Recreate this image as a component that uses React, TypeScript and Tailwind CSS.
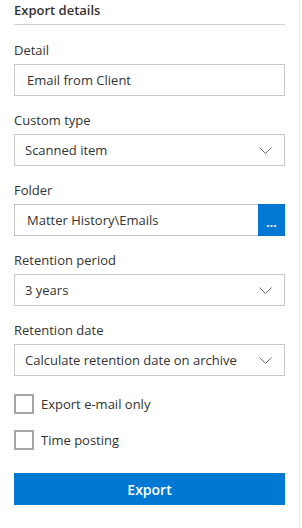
import React from "react";

function Chevron() {
  return (
    <svg width="13" height="7" viewBox="0 0 13 7" fill="none" className="shrink-0">
      <path d="M0.5 0.5 L6.5 6.5 L12.5 0.5" stroke="#6b6b6b" strokeWidth="1" />
    </svg>
  );
}

function Field({ label, children }: { label: string; children: React.ReactNode }) {
  return (
    <div className="flex flex-col gap-[4px]">
      <label className="h-[20px] leading-[20px] text-[#333]">{label}</label>
      {children}
    </div>
  );
}

function Select({ value }: { value: string }) {
  return (
    <div className="h-[32px] border border-[#c8c8c8] flex items-start pl-[10px] pr-[12px] overflow-hidden">
      <span className="flex-1 leading-[20px] pt-[5px] text-[#333] pr-[6px]">{value}</span>
      <span className="h-[30px] flex items-center">
        <Chevron />
      </span>
    </div>
  );
}

function Check({ label }: { label: string }) {
  return (
    <div className="flex items-center gap-[7px] h-[20px]">
      <span className="w-[20px] h-[20px] border-2 border-[#a6a6a6] bg-white" />
      <span className="text-[#333] leading-[20px]">{label}</span>
    </div>
  );
}

export default function App() {
  return (
    <div
      className="w-[300px] h-[528px] bg-white border-r border-[#ececec] text-[13px]"
      style={{ fontFamily: '"Open Sans", "Noto Sans", sans-serif' }}
    >
      <div className="px-[14px]">
        <div className="h-[25px] border-b border-[#d0d0d0] pb-[3px] flex items-center font-semibold text-[#333]">
          Export details
        </div>

        <div className="flex flex-col gap-[14px] mt-[15px]">
          <Field label="Detail">
            <div className="h-[32px] border border-[#c8c8c8] pl-[12px] leading-[30px] text-[#333]">
              Email from Client
            </div>
          </Field>

          <Field label="Custom type">
            <Select value="Scanned item" />
          </Field>

          <Field label="Folder">
            <div className="h-[32px] flex">
              <div className="flex-1 border border-[#c8c8c8] border-r-0 pl-[12px] leading-[30px] text-[#333]">
                Matter History\Emails
              </div>
              <button className="w-[27px] h-[32px] bg-[#0078d4] text-white text-[12px] font-bold leading-none flex items-center justify-center pt-[6px]">
                ...
              </button>
            </div>
          </Field>

          <Field label="Retention period">
            <Select value="3 years" />
          </Field>

          <Field label="Retention date">
            <Select value="Calculate retention date on archive time" />
          </Field>
        </div>

        <div className="flex flex-col gap-[16px] mt-[18px]">
          <Check label="Export e-mail only" />
          <Check label="Time posting" />
        </div>

        <button className="mt-[23px] w-full h-[32px] bg-[#0078d4] text-white font-semibold text-[14px]">
          Export
        </button>
      </div>
    </div>
  );
}
